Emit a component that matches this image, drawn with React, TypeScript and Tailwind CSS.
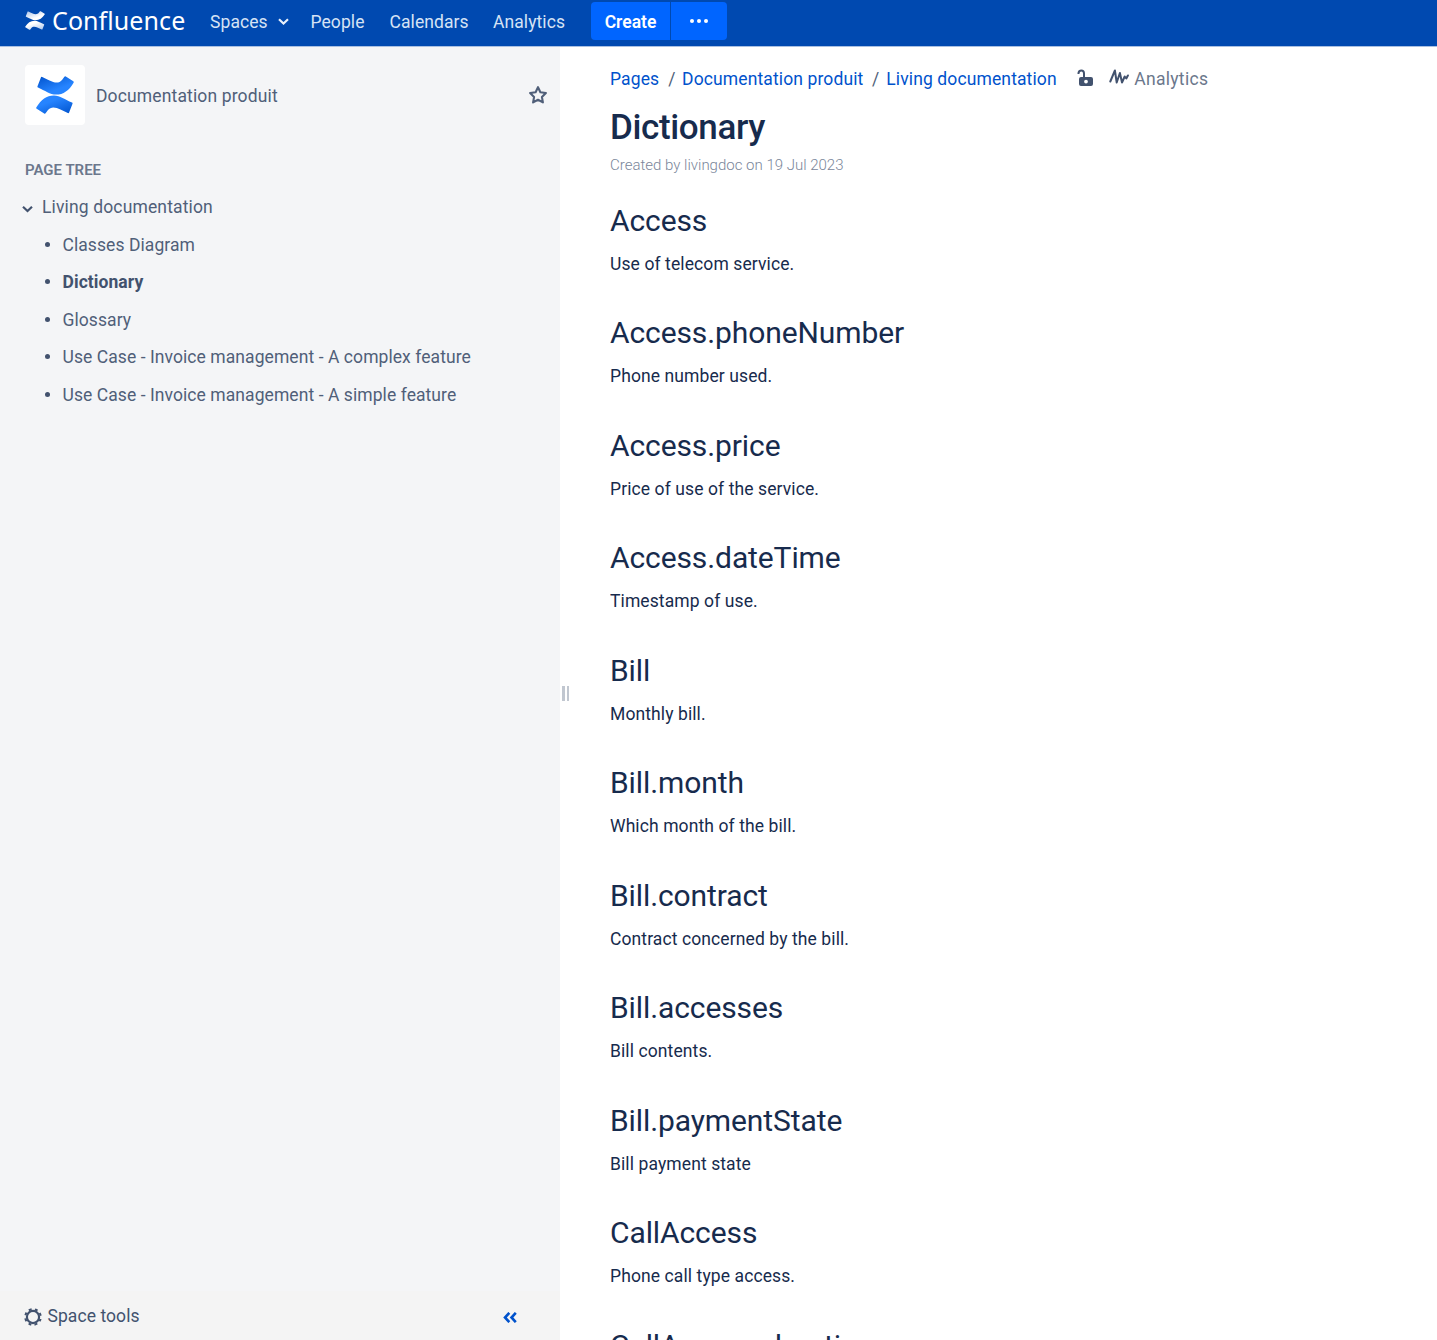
import React from "react";

const treeItems = [
  { label: "Classes Diagram" },
  { label: "Dictionary", active: true },
  { label: "Glossary" },
  { label: "Use Case - Invoice management - A complex feature" },
  { label: "Use Case - Invoice management - A simple feature" },
];

const entries = [
  ["Access", "Use of telecom service."],
  ["Access.phoneNumber", "Phone number used."],
  ["Access.price", "Price of use of the service."],
  ["Access.dateTime", "Timestamp of use."],
  ["Bill", "Monthly bill."],
  ["Bill.month", "Which month of the bill."],
  ["Bill.contract", "Contract concerned by the bill."],
  ["Bill.accesses", "Bill contents."],
  ["Bill.paymentState", "Bill payment state"],
  ["CallAccess", "Phone call type access."],
  ["CallAccess.duration", "Duration of the call."],
];

function ConfluenceMark({ id, from, to, className }: { id: string; from: string; to: string; className: string }) {
  return (
    <svg viewBox="0 0 38 38" className={className} preserveAspectRatio="none">
      <defs>
        <linearGradient id={id + "a"} x1="0" y1="0" x2="0.6" y2="0.8">
          <stop offset="0" stopColor={from} />
          <stop offset="0.9" stopColor={to} />
        </linearGradient>
        <linearGradient id={id + "b"} x1="1" y1="1" x2="0.4" y2="0.2">
          <stop offset="0" stopColor={from} />
          <stop offset="0.9" stopColor={to} />
        </linearGradient>
      </defs>
      <path
        fill={`url(#${id}a)`}
        d="M5 1.200 Q5.400 .5 6.200 .9 L13.500 4.500 C18.500 6.900 23 7.900 26.200 3.700 L28.400 .7 Q29 0 29.800 .5 L37.300 5.300 Q38.100 5.900 37.600 6.700 C33 14.500 27.500 18.600 20 18.600 C14 18.600 9 14.600 2 11.500 Q1.200 11.100 1.500 10.300 Z"
      />
      <path
        fill={`url(#${id}b)`}
        d="M33 36.800 Q32.600 37.500 31.800 37.100 L24.500 33.500 C19.500 31.100 15 30.100 11.800 34.300 L9.600 37.300 Q9 38 8.200 37.500 L.7 32.700 Q-.1 32.100 .4 31.300 C5 23.500 10.500 19.400 18 19.400 C24 19.400 29 23.400 36 26.500 Q36.800 26.900 36.500 27.700 Z"
      />
    </svg>
  );
}

function Header() {
  return (
    <header className="flex h-[47px] w-full shrink-0 border-b border-[#a9c0e2] bg-[#0049b0] pl-[25px] text-[17.5px] leading-[25px] tracking-[0.08px] text-[#d6e3f5]">
      <ConfluenceMark id="h" from="#a9c3ea" to="#ffffff" className="mt-[11px] h-[19px] w-[20px]" />
      <span className="ml-[7px] mt-[3px] w-[133px] font-['Noto_Sans'] text-[25px] leading-[34px] text-white">Confluence</span>
      <span className="ml-[25px] mt-[10px] w-[58px]">Spaces</span>
      <svg className="ml-[10px] mt-[18px] h-[8px] w-[11px]" viewBox="0 0 11 8" fill="none" stroke="#eaf1fb" strokeWidth="2.2">
        <path d="M1 1.300 L5.500 5.500 L10 1.300" />
      </svg>
      <span className="ml-[21.5px] mt-[10px] w-[54px]">People</span>
      <span className="ml-[25px] mt-[10px] w-[79px]">Calendars</span>
      <span className="ml-[24.5px] mt-[10px] w-[73px]">Analytics</span>
      <div className="ml-[25px] mt-[2px] flex h-[38px] gap-px text-white">
        <div className="flex w-[79px] items-center justify-center rounded-l-[4px] bg-[#0065ff] pt-[3px] font-semibold tracking-normal">Create</div>
        <div className="flex w-[56px] items-center justify-center gap-[3px] rounded-r-[4px] bg-[#0065ff]">
          <i className="size-[4px] rounded-full bg-white" />
          <i className="size-[4px] rounded-full bg-white" />
          <i className="size-[4px] rounded-full bg-white" />
        </div>
      </div>
    </header>
  );
}

function Sidebar() {
  return (
    <aside className="flex w-[560px] shrink-0 flex-col bg-[#f4f5f7] text-[17.5px] leading-[25px] tracking-[0.07px] text-[#505f79]">
      <div className="flex items-center pl-[25px] pt-[18px]">
        <div className="flex size-[60px] items-center justify-center rounded-[4px] bg-white">
          <ConfluenceMark id="s" from="#0052cc" to="#2684ff" className="h-[38px] w-[38px]" />
        </div>
        <span className="ml-[11px] mt-[2px] tracking-[0.14px]">Documentation produit</span>
        <svg className="ml-auto mr-[12.5px] size-[20px]" viewBox="0 0 20 20" fill="none" stroke="#505f79" strokeWidth="2.100" strokeLinejoin="round">
          <path d="M10 2.200 L12.400 7.200 L17.900 8 L13.900 11.900 L14.900 17.400 L10 14.800 L5.100 17.400 L6.100 11.900 L2.100 8 L7.600 7.200 Z" />
        </svg>
      </div>
      <h2 className="ml-[25px] mt-[33px] text-[15px] font-semibold leading-[25px] tracking-normal text-[#6b778c]">PAGE TREE</h2>
      <div className="mt-[12px] flex items-center pl-[22px]">
        <svg className="mt-[2px] h-[8px] w-[11px]" viewBox="0 0 11 8" fill="none" stroke="#42526e" strokeWidth="2.200">
          <path d="M1 1.800 L5.500 6 L10 1.800" />
        </svg>
        <span className="ml-[9px] tracking-[0.14px]">Living documentation</span>
      </div>
      <ul className="mt-[6.5px]">
        {treeItems.map((t) => (
          <li key={t.label} className="flex h-[37.5px] items-center pl-[45px]">
            <i className="mb-[2px] size-[5px] rounded-full bg-[#42526e]" />
            <span className={t.active ? "ml-[12.5px] font-bold text-[#42526e]" : "ml-[12.5px]"}>{t.label}</span>
          </li>
        ))}
      </ul>
      <div className="mt-auto flex h-[49px] items-center bg-[#f4f4f4] pl-[24px] text-[#42526e]">
        <svg className="mt-[3px] size-[18px]" viewBox="0 0 18 18" fill="none" stroke="#42526e">
          <circle cx="9" cy="9" r="6.100" strokeWidth="2.200" />
          <circle cx="9" cy="9" r="7.800" strokeWidth="2" strokeDasharray="3 3.126" strokeDashoffset="1.500" transform="rotate(22.500 9 9)" />
        </svg>
        <span className="ml-[5.5px] mt-[2px]">Space tools</span>
        <svg className="ml-auto mr-[43px] mt-[3px] h-[11px] w-[14px]" viewBox="0 0 14 11" fill="none" stroke="#0052cc" strokeWidth="2.600">
          <path d="M6.300 .8 L2 5.500 L6.300 10.200 M12.800 .8 L8.500 5.500 L12.800 10.200" />
        </svg>
      </div>
    </aside>
  );
}

function Breadcrumbs() {
  return (
    <div className="flex h-[25px] text-[17.5px] leading-[25px] tracking-[0.12px] text-[#0052cc]">
      <span>Pages</span>
      <span className="ml-[9px] mr-[6.500px] text-[#505f79]">/</span>
      <span>Documentation produit</span>
      <span className="ml-[8.500px] mr-[7px] text-[#505f79]">/</span>
      <span>Living documentation</span>
      <svg className="ml-[20px] mt-[2px] h-[18px] w-[17px]" viewBox="0 0 17 18" fill="#42526e">
        <path fillRule="evenodd" d="M4 8 H14 Q16 8 16 10 V15 Q16 17 14 17 H4 Q2 17 2 15 V10 Q2 8 4 8 Z M9 10.700 A1.900 1.900 0 1 0 9 14.500 A1.900 1.900 0 1 0 9 10.700 Z" />
        <path d="M1.500 5 V4 Q2 1.500 4.300 1.500 Q7 1.500 7 4.500 V8.500" fill="none" stroke="#42526e" strokeWidth="2" />
      </svg>
      <svg className="ml-[15px] mt-[1px] h-[18px] w-[20px]" viewBox="0 0 20 18" fill="none" stroke="#42526e" strokeWidth="2" strokeLinecap="round" strokeLinejoin="round">
        <path d="M1.300 13.500 L5.900 2.500 L7.700 14.500 L10.900 5 L13 14.500 L15.700 8.500 L17.300 10.500 L18.900 7.500" />
      </svg>
      <span className="ml-[5.500px] tracking-[0.3px] text-[#6b778c]">Analytics</span>
    </div>
  );
}

export default function App() {
  return (
    <div className="flex h-[1340px] w-[1437px] flex-col overflow-hidden bg-white font-['Roboto',sans-serif]">
      <Header />
      <div className="flex min-h-0 flex-1">
        <Sidebar />
        <div className="flex w-[50px] shrink-0 gap-[2px] pl-[2px] pt-[639px]">
          <i className="h-[15px] w-[2.500px] bg-[#c1c7d0]" />
          <i className="h-[15px] w-[2.500px] bg-[#c1c7d0]" />
        </div>
        <main className="min-w-0 flex-1 overflow-hidden pt-[19.500px] text-[#172b4d]">
          <Breadcrumbs />
          <h1 className="mt-[16.500px] text-[35px] font-medium leading-[40px] tracking-[-0.01em]">Dictionary</h1>
          <p className="mt-[7px] text-[15px] font-light leading-[20px] text-[#7a869a]">Created by livingdoc on 19 Jul 2023</p>
          <div className="mt-[26.600px]">
            {entries.map(([title, text]) => (
              <section key={title} className="h-[112.500px]">
                <h2 className="text-[30px] leading-[37.500px] tracking-[-0.1px]">{title}</h2>
                <p className="mt-[12.900px] text-[17.500px] leading-[25px] tracking-[0.1px]">{text}</p>
              </section>
            ))}
          </div>
        </main>
      </div>
    </div>
  );
}
